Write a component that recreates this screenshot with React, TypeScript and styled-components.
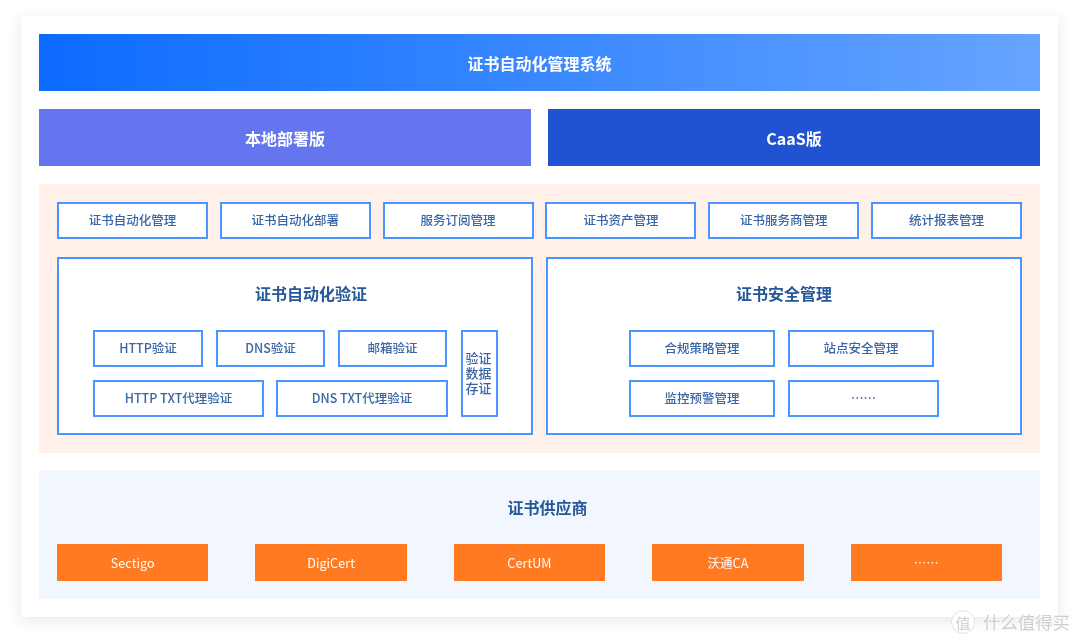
import React from 'react'
import styled, { createGlobalStyle } from 'styled-components'

const GlobalStyle = createGlobalStyle`
  html, body {
    margin: 0;
    padding: 0;
    background: #fff;
    font-family: "Noto Sans CJK SC", "Noto Sans", sans-serif;
  }
  * {
    box-sizing: border-box;
  }
`

const Page = styled.div`
  position: relative;
  width: 1080px;
  height: 644px;
  padding: 16px 22px 0 21px;
  overflow: hidden;
`

const Card = styled.div`
  height: 601px;
  padding: 18px 18px 0;
  background: #fff;
  box-shadow: 0 3px 14px rgba(40, 50, 80, 0.12);
  display: flex;
  flex-direction: column;
  filter: blur(0.4px);
`

const Banner = styled.div`
  height: 57px;
  display: flex;
  align-items: center;
  justify-content: center;
  color: #fff;
  font-size: 16px;
  font-weight: 700;
  background: ${p => p.$bg};
`

const Editions = styled.div`
  display: grid;
  grid-template-columns: 492px 492px;
  gap: 17px;
  margin-top: 18px;
`

const ModulePanel = styled.div`
  height: 269px;
  margin-top: 18px;
  padding: 18px;
  background: #fff1ea;
`

const TopRow = styled.div`
  display: grid;
  grid-template-columns: repeat(6, 151px);
  column-gap: 11.8px;
`

const Cell = styled.div`
  height: 37px;
  width: ${p => (p.$w ? `${p.$w}px` : 'auto')};
  flex: none;
  padding-bottom: 2px;
  display: flex;
  align-items: center;
  justify-content: center;
  background: #fff;
  border: 2px solid #4a95ff;
  color: #3a66a5;
  font-size: 12.5px;
  font-weight: 500;
  white-space: nowrap;
`

const Sections = styled.div`
  display: grid;
  grid-template-columns: 476px 476px;
  gap: 13px;
  margin-top: 18px;
`

const Section = styled.div`
  height: 178px;
  background: #fff;
  border: 2px solid #4a95ff;
  padding: 0 34px;
`

const SectionTitle = styled.div`
  height: 71px;
  padding-bottom: 4px;
  padding-left: ${p => p.$shift || 0}px;
  display: flex;
  align-items: center;
  justify-content: center;
  color: #265797;
  font-size: 16px;
  font-weight: 700;
`

const VerifyBody = styled.div`
  display: flex;
  gap: 13px;
`

const CellStack = styled.div`
  display: flex;
  flex-direction: column;
  gap: 13px;
`

const CellRow = styled.div`
  display: flex;
  gap: ${p => p.$gap || 13}px;
`

const TallCell = styled(Cell)`
  width: 37px;
  height: 87px;
  padding-right: 2px;
  font-size: 13px;
  line-height: 15px;
  text-align: center;
  white-space: normal;
`

const SafetyBody = styled(CellStack)`
  padding-left: 47px;
`

const SupplierPanel = styled.div`
  height: 129px;
  margin-top: 17px;
  padding: 0 18px;
  background: #f2f6fe;
`

const SupplierTitle = styled(SectionTitle)`
  height: 74px;
  padding-bottom: 0;
`

const SupplierRow = styled.div`
  display: flex;
  gap: 47px;
`

const Supplier = styled.div`
  width: 151.4px;
  height: 37px;
  display: flex;
  align-items: center;
  justify-content: center;
  background: #ff7a21;
  color: #fff;
  font-size: 12.5px;
  letter-spacing: 0.1px;
`

const Watermark = styled.div`
  position: absolute;
  left: 951px;
  top: 610px;
  display: flex;
  align-items: center;
  gap: 8px;
  color: #cfcfcf;
  text-shadow: 0 0 2px rgba(255, 255, 255, 0.9);
  filter: blur(0.3px);
`

const WatermarkLogo = styled.div`
  width: 24px;
  height: 24px;
  border-radius: 50%;
  border: 1px solid #e2e2e2;
  background: rgba(255, 255, 255, 0.85);
  display: flex;
  align-items: center;
  justify-content: center;
  font-size: 15px;
  line-height: 1;
`

const WatermarkText = styled.div`
  font-size: 17.4px;
  line-height: 24px;
  white-space: nowrap;
`

const modules = ['证书自动化管理', '证书自动化部署', '服务订阅管理', '证书资产管理', '证书服务商管理', '统计报表管理']
const suppliers = ['Sectigo', 'DigiCert', 'CertUM', '沃通CA', '……']

const App: React.FC = () => {
  return (
    <Page>
      <GlobalStyle />
      <Card>
        <Banner $bg="linear-gradient(90deg, #0c6bff 0%, #66a4ff 100%)">证书自动化管理系统</Banner>
        <Editions>
          <Banner $bg="#6376ef">本地部署版</Banner>
          <Banner $bg="#2152d1">CaaS版</Banner>
        </Editions>

        <ModulePanel>
          <TopRow>
            {modules.map(name => <Cell key={name}>{name}</Cell>)}
          </TopRow>
          <Sections>
            <Section>
              <SectionTitle $shift={32}>证书自动化验证</SectionTitle>
              <VerifyBody>
                <CellStack>
                  <CellRow>
                    <Cell $w={110}>HTTP验证</Cell>
                    <Cell $w={109}>DNS验证</Cell>
                    <Cell $w={109}>邮箱验证</Cell>
                  </CellRow>
                  <CellRow $gap={12}>
                    <Cell $w={171}>HTTP TXT代理验证</Cell>
                    <Cell $w={172}>DNS TXT代理验证</Cell>
                  </CellRow>
                </CellStack>
                <TallCell>验证<br />数据<br />存证</TallCell>
              </VerifyBody>
            </Section>
            <Section>
              <SectionTitle>证书安全管理</SectionTitle>
              <SafetyBody>
                <CellRow>
                  <Cell $w={146}>合规策略管理</Cell>
                  <Cell $w={146}>站点安全管理</Cell>
                </CellRow>
                <CellRow>
                  <Cell $w={146}>监控预警管理</Cell>
                  <Cell $w={151}>……</Cell>
                </CellRow>
              </SafetyBody>
            </Section>
          </Sections>
        </ModulePanel>

        <SupplierPanel>
          <SupplierTitle $shift={16}>证书供应商</SupplierTitle>
          <SupplierRow>
            {suppliers.map(name => <Supplier key={name}>{name}</Supplier>)}
          </SupplierRow>
        </SupplierPanel>
      </Card>
      <Watermark>
        <WatermarkLogo>值</WatermarkLogo>
        <WatermarkText>什么值得买</WatermarkText>
      </Watermark>
    </Page>
  )
}

export default App
